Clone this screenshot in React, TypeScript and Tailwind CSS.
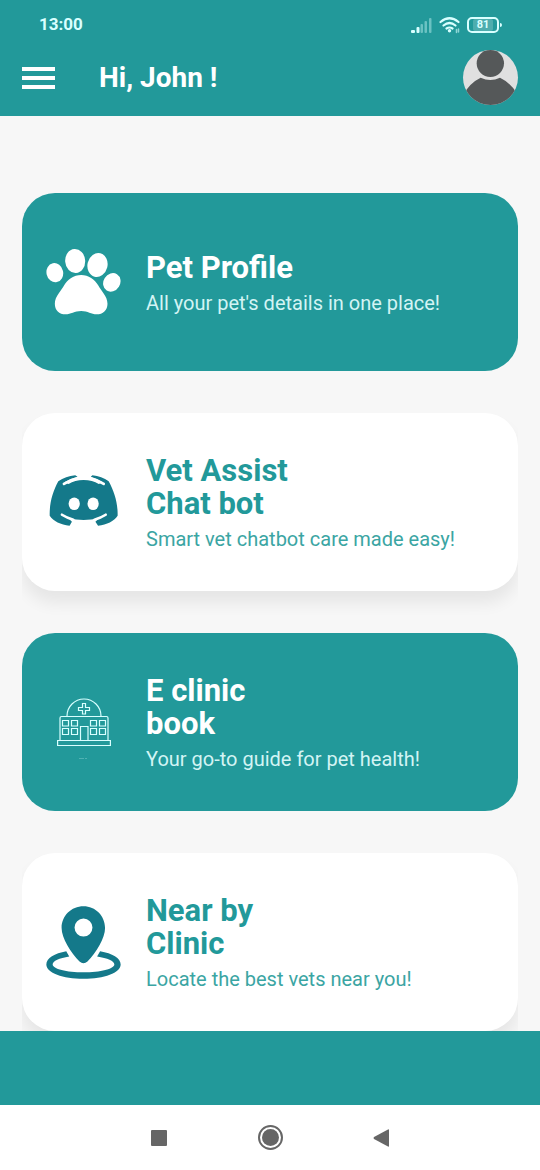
import type { ReactNode } from "react";

function PawIcon() {
  return (
    <svg viewBox="80 194 224 198" className="h-[66px] w-[75px]" fill="currentColor" aria-hidden="true">
      <ellipse cx="106" cy="265" rx="25" ry="29" transform="rotate(-12 106 265)" />
      <ellipse cx="167" cy="230" rx="30" ry="36" transform="rotate(-4 167 230)" />
      <ellipse cx="234" cy="242" rx="30" ry="36" transform="rotate(14 234 242)" />
      <ellipse cx="277" cy="294" rx="25" ry="29" transform="rotate(32 277 294)" />
      <path d="M185 272C207 272 226 286 236 303C244 319 264 336 264 358C264 378 250 390 232 390C214 390 206 380 185 380C165 380 154 390 138 390C119 390 106 378 106 358C106 336 126 319 134 303C144 286 163 272 185 272Z" />
    </svg>
  );
}

function ChatBotIcon() {
  return (
    <svg viewBox="88 210 206 166" className="h-[55px] w-[69px]" aria-hidden="true">
      <path
        fill="#14798a"
        d="M166 211L173 215Q150 221 133 232L146 237Q165 225 191 225Q218 225 237 237L250 232Q233 221 213 215L218 211Q246 214 267 229C284 260 295 295 294 333C283 350 262 360 235 363L227 351L236 341Q191 350 147 341L156 351L149 363C122 360 100 350 89 333C88 295 98 260 115 229Q137 214 166 211Z"
      />
      <g fill="none" stroke="#fff" strokeWidth="8" strokeLinecap="round">
        <path d="M170 221Q148 226 132 237" />
        <path d="M214 221Q236 226 252 237" />
        <path d="M126 330Q140 339 160 345" />
        <path d="M258 330Q244 339 224 345" />
      </g>
      <ellipse cx="163" cy="297" rx="17" ry="19" fill="#fff" />
      <ellipse cx="220" cy="297" rx="17" ry="19" fill="#fff" />
    </svg>
  );
}

function HospitalIcon() {
  return (
    <svg viewBox="0 -15 54 76" className="h-[76px] w-[54px]" fill="none" stroke="#d9ffff" strokeWidth="1.2" aria-hidden="true">
      <path d="M10 17A17 17 0 0 1 44 17" />
      <path d="M3 41V19Q3 17.500 4.500 17.500H49.500Q51 17.500 51 19V41" />
      <path d="M.6 41.500H53.400V46.500H.6Z" />
      <path d="M25.500 4.500H28.500V8.500H32.500V11.500H28.500V15H25.500V11.500H21.500V8.500H25.500Z" />
      <path d="M23.500 41V27.500H31V41" />
      <path d="M5.500 21.500H11.500V27H5.500ZM14.500 21.500H20.500V27H14.500ZM33.500 21.500H39.500V27H33.500ZM42.500 21.500H48.500V27H42.500Z" />
      <path d="M5.500 29.500H11.500V35.500H5.500ZM14.500 29.500H20.500V35.500H14.500ZM33.500 29.500H39.500V35.500H33.500ZM42.500 29.500H48.500V35.500H42.500Z" />
      <path d="M22 59.500H31" strokeWidth="1" strokeOpacity=".25" strokeDasharray="5 1 2 1" />
    </svg>
  );
}

function PinIcon() {
  return (
    <svg viewBox="80 167 224 220" className="h-[73px] w-[75px]" aria-hidden="true">
      <path
        fill="#14798a"
        fillRule="evenodd"
        d="M140 303C105 310 80 323 80 343C80 368 130 386 192 386C254 386 304 368 304 343C304 323 279 310 242 303L233 319C264 324 285 332 285 343C285 356 243 367 192 367C141 367 99 356 99 343C99 332 119 324 149 319Z"
      />
      <path
        fill="#14798a"
        fillRule="evenodd"
        d="M192 168C155 168 126 197 126 233C126 264 154 307 180 334Q192 345 204 334C230 307 257 264 257 233C257 197 228 168 192 168ZM192 205A27 27 0 1 1 192 259A27 27 0 1 1 192 205Z"
      />
    </svg>
  );
}

function StatusIcons() {
  return (
    <div className="flex items-center gap-[7px] text-[#d9ffff]">
      <svg viewBox="0 0 21 15" className="h-[15px] w-[21px]" fill="currentColor" role="img" aria-label="Signal">
        <rect x="0" y="12" width="4" height="3" rx="1" />
        <rect x="5.500" y="9" width="3" height="6" rx="1" />
        <g fillOpacity=".4">
          <rect x="9.500" y="6" width="2.500" height="9" rx="1" />
          <rect x="13.500" y="3" width="2.500" height="12" rx="1" />
          <rect x="18" y="0" width="2.500" height="15" rx="1" />
        </g>
      </svg>
      <svg viewBox="0 0 21 18" className="h-[18px] w-[21px]" fill="none" stroke="currentColor" strokeWidth="2.2" strokeLinecap="round" role="img" aria-label="Wi-Fi">
        <path d="M1.500 6Q10.500-1.500 19.500 6M4.500 9.500Q10.500 4.500 16.500 9.500M7.500 12.500Q10.500 10.500 13.500 12.500" />
        <circle cx="10.500" cy="14.800" r="1.700" fill="currentColor" stroke="none" />
        <path d="M17.500 13.500V16.500M19.500 13V16" strokeWidth="1.500" strokeOpacity=".6" />
      </svg>
      <div className="flex items-center gap-px" role="img" aria-label="Battery 81 percent">
        <div className="flex h-4 w-8 items-center justify-center rounded-[5px] border-2 border-current text-[11px] font-bold leading-3">
          <span className="rounded-[2px] bg-white/20 px-1">81</span>
        </div>
        <div className="h-1 w-[2px] rounded-r bg-current" />
      </div>
    </div>
  );
}

type CardData = {
  title: string;
  text: string;
  icon: ReactNode;
  filled: boolean;
};

const cards: CardData[] = [
  { title: "Pet Profile", text: "All your pet's details in one place!", icon: <PawIcon />, filled: true },
  { title: "Vet Assist\nChat bot", text: "Smart vet chatbot care made easy!", icon: <ChatBotIcon />, filled: false },
  { title: "E clinic\nbook", text: "Your go-to guide for pet health!", icon: <HospitalIcon />, filled: true },
  { title: "Near by\nClinic", text: "Locate the best vets near you!", icon: <PinIcon />, filled: false },
];

function Card({ title, text, icon, filled }: CardData) {
  const tone = filled
    ? "bg-[#22999a] text-white"
    : "bg-white text-[#22999a] shadow-[0_12px_16px_rgba(0,0,0,0.07)]";
  return (
    <li>
      <a href="#" className={`flex min-h-[178px] items-center gap-[25px] rounded-[33px] px-6 ${tone}`}>
        <span className="flex w-[75px] shrink-0 justify-center">{icon}</span>
        <span className="block pt-px">
          <span className="block whitespace-pre-line text-[31px] font-bold leading-[33px]">{title}</span>
          <span className={`mt-[7px] block text-[20px] leading-6 ${filled ? "text-[#d3f4f4]" : "text-[#3ba5a3]"}`}>{text}</span>
        </span>
      </a>
    </li>
  );
}

export default function App() {
  return (
    <div className="flex min-h-screen flex-col bg-[#f7f7f7] font-['Roboto',sans-serif]">
      <header className="bg-[#22999a] text-white">
        <div className="flex h-12 items-center justify-between pl-[39px] pr-[38px] pt-[2px]">
          <span className="text-[17px] font-bold text-[#d9ffff]">13:00</span>
          <StatusIcons />
        </div>
        <div className="flex h-[68px] items-start justify-between px-[22px] pt-[2px]">
          <div className="flex h-[55px] items-center gap-11">
            <button type="button" aria-label="Open menu" className="flex w-[33px] flex-col gap-[5px]">
              <span className="h-1 w-full bg-white" />
              <span className="h-1 w-full bg-white" />
              <span className="h-1 w-full bg-white" />
            </button>
            <h1 className="text-[28px] font-bold leading-8">Hi, John !</h1>
          </div>
          <button type="button" aria-label="Profile" className="size-[55px] overflow-hidden rounded-full bg-[#e0e0e0]">
            <svg viewBox="219 150 165 165" className="size-full" fill="#555859" aria-hidden="true">
              <circle cx="301" cy="190" r="41" />
              <path d="M219 315V285Q240 248 272 233Q301 247 330 233Q362 248 384 285V315Z" />
            </svg>
          </button>
        </div>
      </header>

      <main className="flex-1 overflow-hidden px-[22px] pt-[77px]">
        <ul className="flex flex-col gap-[42px] overflow-x-clip">
          {cards.map((card) => (
            <Card key={card.text} {...card} />
          ))}
        </ul>
      </main>

      <footer className="h-[74px] bg-[#22999a]" />

      <nav aria-label="System" className="flex h-[65px] items-center justify-center gap-[86px] bg-white text-[#666]">
        <button type="button" aria-label="Recent apps" className="flex size-[25px] items-center justify-center">
          <span className="size-4 rounded-[1px] bg-current" />
        </button>
        <button type="button" aria-label="Home" className="flex size-[25px] items-center justify-center rounded-full border-2 border-current">
          <span className="size-[17px] rounded-full bg-current" />
        </button>
        <button type="button" aria-label="Back" className="flex size-[25px] items-center justify-center">
          <svg viewBox="0 0 16 18" className="h-[18px] w-4" fill="currentColor" aria-hidden="true">
            <path d="M15 .5Q16 0 16 1V17Q16 18 15 17.500L1 10Q0 9 1 8Z" />
          </svg>
        </button>
      </nav>
    </div>
  );
}
